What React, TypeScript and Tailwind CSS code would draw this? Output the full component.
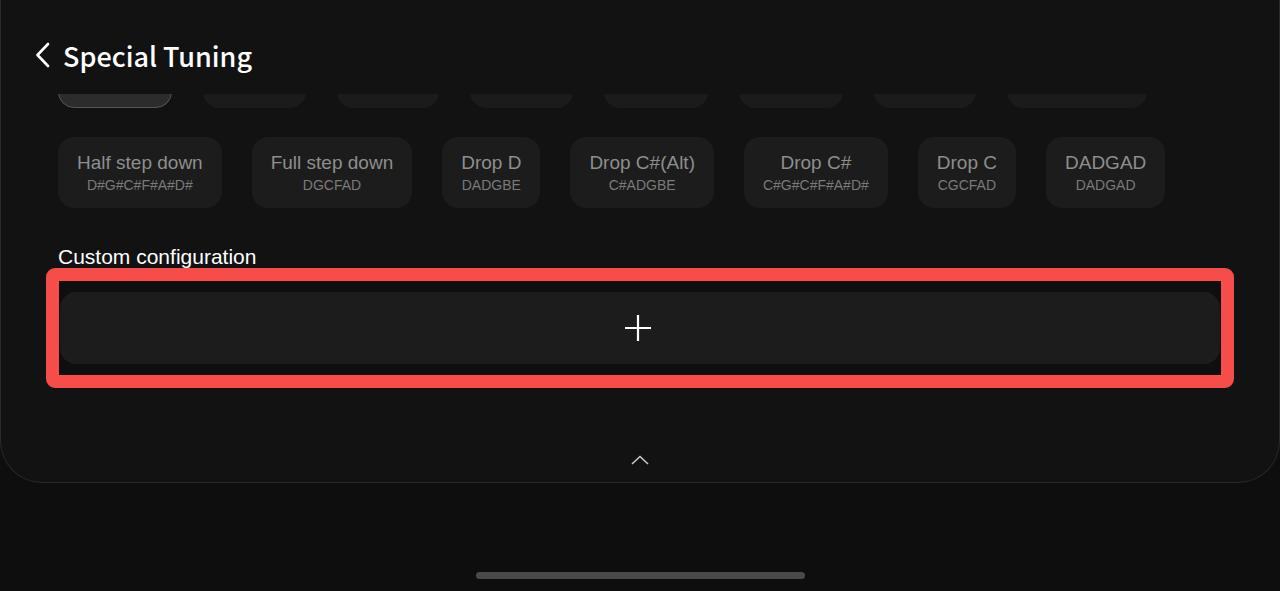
import React from 'react';

interface Tuning {
  name: string;
  notes: string;
}

const hiddenRow: { w: string; selected?: boolean }[] = [
  { w: 'w-[114px]', selected: true },
  { w: 'w-[103px]' },
  { w: 'w-[102px]' },
  { w: 'w-[103px]' },
  { w: 'w-[104px]' },
  { w: 'w-[104px]' },
  { w: 'w-[102px]' },
  { w: 'w-[140px]' },
];

const tunings: Tuning[] = [
  { name: 'Half step down', notes: 'D#G#C#F#A#D#' },
  { name: 'Full step down', notes: 'DGCFAD' },
  { name: 'Drop D', notes: 'DADGBE' },
  { name: 'Drop C#(Alt)', notes: 'C#ADGBE' },
  { name: 'Drop C#', notes: 'C#G#C#F#A#D#' },
  { name: 'Drop C', notes: 'CGCFAD' },
  { name: 'DADGAD', notes: 'DADGAD' },
];

const TuningChip: React.FC<{ tuning: Tuning }> = ({ tuning }) => (
  <button className="h-[71px] px-[19px] pt-[15px] rounded-2xl bg-[#1c1c1c] flex flex-col items-center font-['Liberation_Sans',Arial,sans-serif]">
    <span className="text-[19px] leading-[22px] text-[#8e8e8e] whitespace-nowrap">{tuning.name}</span>
    <span className="mt-[2px] text-[14px] leading-[18px] text-[#7a7a7a] whitespace-nowrap">{tuning.notes}</span>
  </button>
);

export default function App() {
  return (
    <div className="w-[1280px] h-[591px] bg-[#0e0e0e] flex flex-col items-center overflow-hidden">
      <div className="w-full bg-[#121212] border-x border-b border-[#2a2a2a] rounded-b-[42px] flex flex-col">
        {/* header */}
        <div className="h-[94px] flex items-center pl-[34px] pt-[16px]">
          <svg width="16" height="26" viewBox="0 0 16 26" fill="none" className="mr-[12px]">
            <path d="M13 2 L2.5 13 L13 24" stroke="#ffffff" strokeWidth="2.6" strokeLinecap="round" strokeLinejoin="round" />
          </svg>
          <h1 className="text-[27px] font-medium text-white font-['Noto_Sans_CJK_SC','Noto_Sans',sans-serif] leading-none">
            Special Tuning
          </h1>
        </div>

        {/* scrolled tuning list */}
        <div className="overflow-hidden">
          <div className="mt-[-57px] pl-[57px] flex gap-[31px]">
            {hiddenRow.map((c, i) => (
              <div
                key={i}
                className={`${c.w} h-[71px] rounded-2xl ${
                  c.selected ? 'bg-[#2c2c2c] border border-[#555555]' : 'bg-[#1b1b1b]'
                }`}
              />
            ))}
          </div>
        </div>
        <div className="mt-[29px] pl-[57px] flex gap-[30px]">
          {tunings.map(t => (
            <TuningChip key={t.name} tuning={t} />
          ))}
        </div>

        {/* custom configuration */}
        <p className="mt-[37px] pl-[57px] text-[21px] leading-[23px] text-white font-['Liberation_Sans',Arial,sans-serif]">
          Custom configuration
        </p>
        <div className="ml-[45px] w-[1188px] border-[13px] border-[#f74d4a] rounded-[9px] bg-[#0f0f0f] py-[11px] pl-px pr-px">
          <button className="w-full h-[72px] rounded-2xl bg-[#1c1c1c] flex items-center justify-center pr-[4px]">
            <svg width="28" height="28" viewBox="0 0 28 28" fill="none">
              <path d="M14 1 V27 M1 14 H27" stroke="#ffffff" strokeWidth="2.2" />
            </svg>
          </button>
        </div>

        {/* collapse */}
        <div className="h-[94px] flex items-end justify-center pb-[17px]">
          <svg width="18" height="10" viewBox="0 0 18 10" fill="none">
            <path d="M1 9 L9 1.5 L17 9" stroke="#c8c8c8" strokeWidth="1.6" />
          </svg>
        </div>
      </div>

      <div className="mt-[89px] w-[329px] h-[7px] rounded-full bg-[#4a4a4a]" />
    </div>
  );
}
